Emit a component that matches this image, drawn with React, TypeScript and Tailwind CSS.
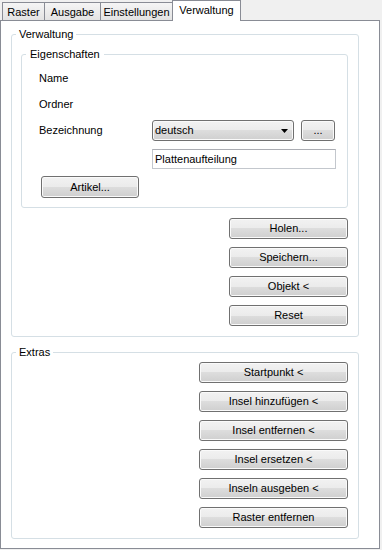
import React from "react";

const btnCls =
  "flex items-center justify-center h-[21px] rounded-[3px] border border-[#707070] bg-[linear-gradient(#f2f2f2_0%,#ebebeb_50%,#dddddd_50%,#cfcfcf_100%)] shadow-[inset_0_0_0_1px_#fafafa] text-black";

function Btn({ children, className = "" }: { children: React.ReactNode; className?: string }) {
  return <div className={`${btnCls} ${className}`}>{children}</div>;
}

const inactiveTab =
  "mt-[2px] flex h-[18px] justify-center border border-b-0 border-[#898c95] bg-[linear-gradient(#f5f5f5,#e3e3e3)] pt-[3px]";

export default function App() {
  return (
    <div className="w-[382px] h-[550px] bg-[#f0f0f0] font-['Liberation_Sans',Arial,sans-serif] text-[11px] leading-[13px] text-black">
      {/* Tab strip */}
      <div className="flex h-[20px] items-start pl-[2px]">
        <div className={`${inactiveTab} w-[43px]`}>Raster</div>
        <div className={`${inactiveTab} -ml-px w-[57px]`}>Ausgabe</div>
        <div className={`${inactiveTab} -ml-px w-[73px]`}>Einstellungen</div>
        <div className="relative z-10 -ml-px flex h-[21px] w-[69px] justify-center border border-b-0 border-[#898c95] bg-white pt-[3px]">
          Verwaltung
        </div>
      </div>

      {/* Tab page */}
      <div className="h-[529px] w-[380px] border border-[#898c95] bg-white pt-[7px]">
        {/* Verwaltung group */}
        <fieldset className="ml-[10px] w-[348px] rounded-[3px] border border-[#d5dfe5] p-0">
          <legend className="ml-[4px] px-[3px] leading-[13px]">Verwaltung</legend>
          <div className="flex flex-col pb-[10px]">
            {/* Eigenschaften group */}
            <fieldset className="mt-[7px] ml-[9px] w-[327px] rounded-[3px] border border-[#d5dfe5] p-0">
              <legend className="ml-[4px] px-[4px] leading-[13px]">Eigenschaften</legend>
              <div className="flex flex-col pt-[7px] pb-[9px] pl-[17px]">
                <div className="flex h-[21px] items-center">Name</div>
                <div className="mt-[5px] flex h-[21px] items-center">Ordner</div>
                <div className="mt-[5px] flex h-[21px] items-center">
                  <div className="w-[113px]">Bezeichnung</div>
                  <div className={`${btnCls} w-[142px] !justify-between pl-[2px] pr-[5px]`}>
                    <span>deutsch</span>
                    <svg width="7" height="4" viewBox="0 0 7 4">
                      <polygon points="0,0 7,0 3.5,4" fill="#000" />
                    </svg>
                  </div>
                  <Btn className="ml-[7px] w-[34px]">...</Btn>
                </div>
                <div className="mt-[8px] ml-[113px] flex h-[20px] w-[184px] items-center border border-[#c3c7cd] border-t-[#abadb3] bg-white pl-[2px]">
                  Plattenaufteilung
                </div>
                <Btn className="mt-[7px] ml-[2px] h-[22px] w-[98px]">Artikel...</Btn>
              </div>
            </fieldset>

            <div className="mt-[10px] mr-[10px] flex flex-col gap-[8px] self-end">
              <Btn className="w-[119px]">Holen...</Btn>
              <Btn className="w-[119px]">Speichern...</Btn>
              <Btn className="w-[119px]">Objekt &lt;</Btn>
              <Btn className="w-[119px]">Reset</Btn>
            </div>
          </div>
        </fieldset>

        {/* Extras group */}
        <fieldset className="mt-[9px] ml-[10px] w-[348px] rounded-[3px] border border-[#d5dfe5] p-0">
          <legend className="ml-[4px] px-[3px] leading-[13px]">Extras</legend>
          <div className="flex flex-col items-end gap-[8px] pt-[3px] pb-[10px] pr-[10px]">
            <Btn className="w-[149px]">Startpunkt &lt;</Btn>
            <Btn className="w-[149px]">Insel hinzufügen &lt;</Btn>
            <Btn className="w-[149px]">Insel entfernen &lt;</Btn>
            <Btn className="w-[149px]">Insel ersetzen &lt;</Btn>
            <Btn className="w-[149px]">Inseln ausgeben &lt;</Btn>
            <Btn className="w-[149px]">Raster entfernen</Btn>
          </div>
        </fieldset>
      </div>
    </div>
  );
}
